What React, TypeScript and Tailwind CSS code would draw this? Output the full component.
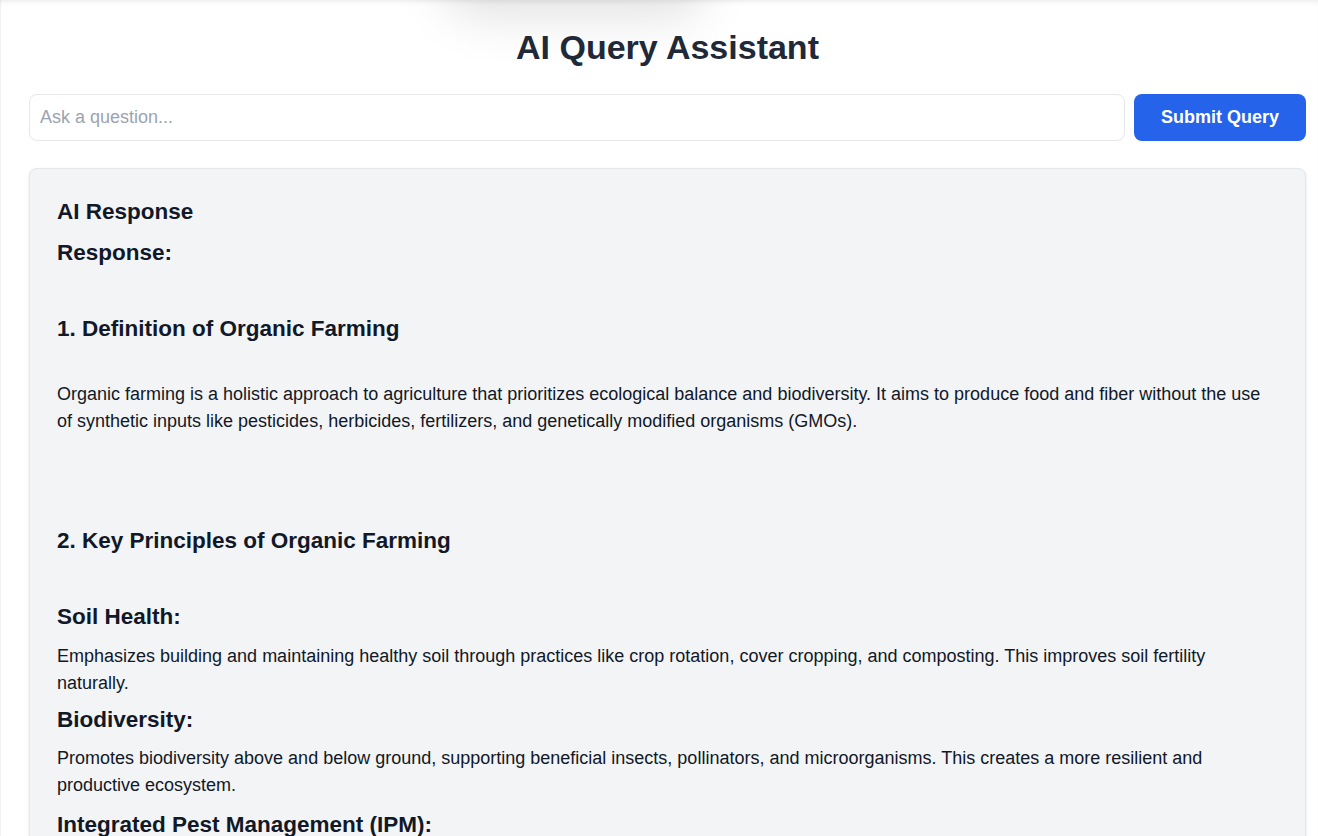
import { useState } from 'react'

const font = { fontFamily: '"Liberation Sans", Arial, sans-serif' }

type Block =
  | { kind: 'heading'; text: string; gap: string }
  | { kind: 'para'; text: string; gap: string }

const blocks: Block[] = [
  { kind: 'heading', text: 'Response:', gap: 'mt-[11px]' },
  { kind: 'heading', text: '1. Definition of Organic Farming', gap: 'mt-[46px]' },
  {
    kind: 'para',
    text: 'Organic farming is a holistic approach to agriculture that prioritizes ecological balance and biodiversity. It aims to produce food and fiber without the use of synthetic inputs like pesticides, herbicides, fertilizers, and genetically modified organisms (GMOs).',
    gap: 'mt-[37px]',
  },
  { kind: 'heading', text: '2. Key Principles of Organic Farming', gap: 'mt-[92px]' },
  { kind: 'heading', text: 'Soil Health:', gap: 'mt-[46px]' },
  {
    kind: 'para',
    text: 'Emphasizes building and maintaining healthy soil through practices like crop rotation, cover cropping, and composting. This improves soil fertility naturally.',
    gap: 'mt-[11px]',
  },
  { kind: 'heading', text: 'Biodiversity:', gap: 'mt-[9px]' },
  {
    kind: 'para',
    text: 'Promotes biodiversity above and below ground, supporting beneficial insects, pollinators, and microorganisms. This creates a more resilient and productive ecosystem.',
    gap: 'mt-[10px]',
  },
  { kind: 'heading', text: 'Integrated Pest Management (IPM):', gap: 'mt-[11px]' },
]

export default function App() {
  const [query, setQuery] = useState('')

  return (
    <div
      className="relative min-h-screen overflow-hidden bg-white shadow-[inset_1px_0_1px_rgba(0,0,0,0.06),inset_0_5px_5px_-3px_rgba(0,0,0,0.07)]"
      style={font}
    >
      {/* soft shadow blob above the title */}
      <div className="pointer-events-none absolute left-[440px] top-[-70px] h-[90px] w-[270px] rounded-full bg-black/10 blur-[22px]" />

      <div className="relative pl-[29px] pr-[12px] pt-[27px]">
        <h1 className="text-center text-[34px] font-bold leading-[40px] text-[#1f2937]">AI Query Assistant</h1>

        <div className="mt-[27px] flex gap-[9px]">
          <input
            className="h-[47px] flex-1 rounded-lg border border-gray-200 bg-white px-[10px] text-[18px] text-gray-800 outline-none placeholder:text-[#9ca3af]"
            onChange={(event) => setQuery(event.target.value)}
            placeholder="Ask a question..."
            type="text"
            value={query}
          />
          <button
            className="h-[47px] w-[172px] rounded-lg bg-[#2563eb] text-[18px] font-bold text-white"
            type="button"
          >
            Submit Query
          </button>
        </div>

        <div className="mt-[27px] rounded-lg border border-gray-200 bg-[#f3f4f6] px-[27px] pb-8 pt-[28px] shadow-sm">
          <h2 className="text-[22.5px] font-bold leading-[30px] text-[#111827]">AI Response</h2>
          {blocks.map((block) =>
            block.kind === 'heading' ? (
              <h3 key={block.text} className={`${block.gap} text-[22.5px] font-bold leading-[30px] text-[#111827]`}>
                {block.text}
              </h3>
            ) : (
              <p key={block.text} className={`${block.gap} text-[18px] leading-[26.6px] text-[#111827]`}>
                {block.text}
              </p>
            ),
          )}
        </div>
      </div>
    </div>
  )
}
